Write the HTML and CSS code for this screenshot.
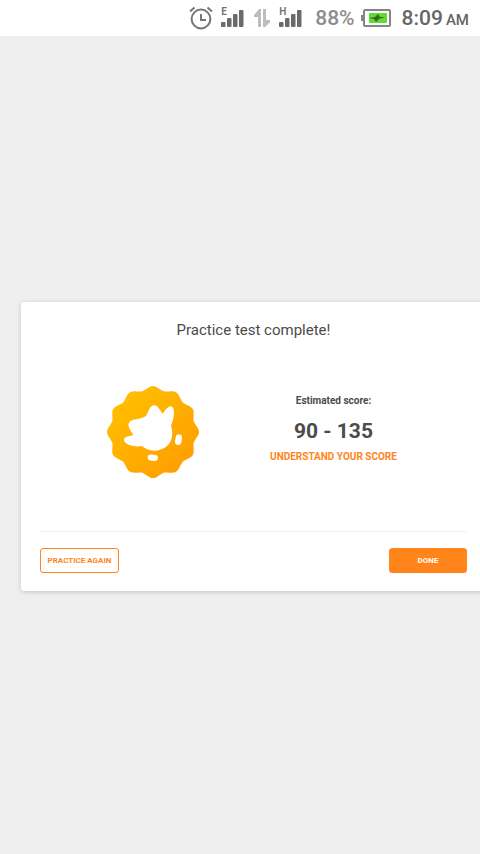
FILE: index.html
```html
<!DOCTYPE html>
<html lang="en">
<head>
<meta charset="utf-8">
<meta name="viewport" content="width=device-width, initial-scale=1">
<title>Practice test complete</title>
<link rel="stylesheet" href="styles.css">
</head>
<body>
<header class="status">
  <svg class="alarm" width="24" height="24" viewBox="0 0 24 24" fill="none" stroke="#757575" stroke-width="2" aria-hidden="true">
    <circle cx="12" cy="13" r="9.4"/><path d="M12 8v6h5M1 5.500l4.500-4M23 5.500l-4.500-4"/>
  </svg>
  <div class="signal">
    <span class="network">E</span>
    <svg width="24" height="20" viewBox="0 0 24 20" fill="#6b6b6b" aria-hidden="true"><rect y="14" width="4.500" height="5" rx="1"/><rect x="6" y="10" width="4.500" height="9" rx="1"/><rect x="12" y="6" width="4.500" height="13" rx="1"/><rect x="18" y="2" width="4.500" height="17" rx="1"/></svg>
  </div>
  <svg class="arrows" width="18" height="20" viewBox="0 0 18 20" fill="#bdbdbd" aria-hidden="true"><path d="M6 1h2v18H5V9H1V7zM10 1h3v11h4v2l-5 5h-2z"/></svg>
  <div class="signal">
    <span class="network">H</span>
    <svg width="24" height="20" viewBox="0 0 24 20" fill="#6b6b6b" aria-hidden="true"><rect y="14" width="4.500" height="5" rx="1"/><rect x="6" y="10" width="4.500" height="9" rx="1"/><rect x="12" y="6" width="4.500" height="13" rx="1"/><rect x="18" y="2" width="4.500" height="17" rx="1"/></svg>
  </div>
  <span class="percent">88%</span>
  <svg class="battery" width="30" height="18" viewBox="0 0 30 18" aria-hidden="true"><rect x="3" y="1" width="26" height="16" rx="1" fill="#fff" stroke="#858585" stroke-width="2"/><path d="M0 6h3v6H0z" fill="#858585"/><rect x="8" y="4" width="18" height="10" rx="1" fill="#5fdc32"/><path d="M8 9l6-1 3-3 2 3h5l-6 2-3 3-2-3z" fill="#35691f"/></svg>
  <span class="clock">8:09</span><span class="meridiem">AM</span>
</header>
<main class="page">
  <section class="card">
    <h1 class="title">Practice test complete!</h1>
    <div class="result">
      <svg class="badge" width="92" height="92" viewBox="36 32 276 276" role="img" aria-label="Award badge">
        <defs>
          <linearGradient id="gold" x1="0" y1="0" x2="1" y2="1"><stop offset=".1" stop-color="#ffc000"/><stop offset=".9" stop-color="#ff9d00"/></linearGradient>
          <path id="petal" d="M0 0L-33-122C-22-125-12-138 0-138C12-138 22-125 33-122Z"/>
          <mask id="seal" maskUnits="userSpaceOnUse" x="36" y="32" width="276" height="276">
            <g transform="translate(174 170)" fill="#fff">
              <circle r="124"/>
              <use href="#petal"/><use href="#petal" transform="rotate(30)"/><use href="#petal" transform="rotate(60)"/><use href="#petal" transform="rotate(90)"/><use href="#petal" transform="rotate(120)"/><use href="#petal" transform="rotate(150)"/><use href="#petal" transform="rotate(180)"/><use href="#petal" transform="rotate(210)"/><use href="#petal" transform="rotate(240)"/><use href="#petal" transform="rotate(270)"/><use href="#petal" transform="rotate(300)"/><use href="#petal" transform="rotate(330)"/>
            </g>
          </mask>
        </defs>
        <rect x="36" y="32" width="276" height="276" fill="url(#gold)" mask="url(#seal)"/>
        <g fill="#fff">
          <path d="M203 115C209 107 216 96 225 93C234 91 238 103 237 114C236 128 233 140 228 151C233 164 233 180 229 192C222 213 202 226 178 226C164 226 151 221 141 212C124 215 104 212 93 204C87 199 85 192 89 188C95 183 106 182 115 179C110 172 104 164 101 153C99 144 104 137 113 134C127 129 143 130 153 121C160 113 161 99 170 92C177 88 185 90 190 97Z"/>
          <rect x="241" y="177" width="19" height="32" rx="9" transform="rotate(8 250 193)"/>
          <rect x="158" y="238" width="31" height="18" rx="9" transform="rotate(6 173 247)"/>
        </g>
      </svg>
      <div class="score">
        <p class="label">Estimated score:</p>
        <p class="range">90 - 135</p>
        <a class="link" href="#">UNDERSTAND YOUR SCORE</a>
      </div>
    </div>
    <footer class="actions">
      <button class="button outline" type="button">PRACTICE AGAIN</button>
      <button class="button solid" type="button">DONE</button>
    </footer>
  </section>
</main>
</body>
</html>
```

FILE: styles.css
```css
* { box-sizing: border-box; }
body {
  margin: 0;
  min-height: 100vh;
  display: flex;
  flex-direction: column;
  overflow-x: hidden;
  background: #efefef;
  color: #4b4b4b;
  font-family: Roboto, "Liberation Sans", sans-serif;
}
h1, p { margin: 0; }
.status {
  height: 36px;
  padding-right: 11px;
  display: flex;
  align-items: center;
  justify-content: flex-end;
  background: #fff;
  color: #666;
  font-weight: 500;
}
.alarm { margin-right: 8px; }
.signal { position: relative; display: flex; }
.network {
  position: absolute;
  top: -1px;
  left: 0;
  color: #757575;
  font-size: 10px;
  line-height: 10px;
  font-weight: 700;
}
.arrows { margin: 0 8px; }
.percent { margin: 0 6px 0 12px; color: #8c8c8c; font-size: 21px; }
.battery { margin-right: 11px; }
.clock { font-size: 21px; }
.meridiem { margin-left: 3px; padding-top: 4px; font-size: 15px; }
.page {
  flex: 1;
  display: flex;
  flex-direction: column;
  justify-content: center;
  padding: 2px 0 0 21px;
}
.card {
  margin-right: -6px;
  padding: 18px 19px;
  border-radius: 3px;
  background: #fff;
  box-shadow: 0 1px 5px rgba(0, 0, 0, .18);
}
.title {
  font-size: 15px;
  line-height: 20px;
  font-weight: 400;
  text-align: center;
}
.result {
  height: 191px;
  display: grid;
  grid-template-columns: 226px 1fr;
  align-items: center;
  justify-items: center;
}
.badge { display: block; margin-top: -6px; }
.score {
  display: flex;
  flex-direction: column;
  align-items: center;
  margin: 0 66px 0 0;
  padding-bottom: 14px;
  white-space: nowrap;
}
.label { font-size: 10px; line-height: 16px; font-weight: 700; }
.range { margin: 8px 0 6px; font-size: 21px; line-height: 28px; font-weight: 700; }
.link { color: #ff851b; font-size: 10px; line-height: 12px; font-weight: 700; text-decoration: none; }
.actions {
  display: flex;
  justify-content: space-between;
  padding-top: 16px;
  border-top: 1px solid #efefef;
}
.button {
  height: 25px;
  padding: 0;
  border: 1px solid #ff851b;
  border-radius: 3px;
  font-family: inherit;
  font-size: 8px;
  font-weight: 700;
  white-space: nowrap;
}
.outline { width: 79px; background: #fff; color: #ff851b; }
.solid { width: 78px; background: #ff851b; color: #fff; }
```
